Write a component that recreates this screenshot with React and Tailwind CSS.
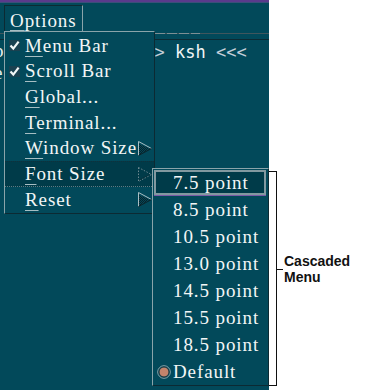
import React from 'react'

function Check() {
  return (
    <svg width="11" height="11" viewBox="0 0 11 11" className="shrink-0">
      <rect x="0" y="0" width="11" height="11" fill="#1a4150" />
      <path d="M1.5 5.5 L4.3 8.6 L9.6 1.6" fill="none" stroke="#f2f6f6" strokeWidth="2.2" />
    </svg>
  )
}

function Arrow({ dim, id }) {
  if (dim) {
    return (
      <svg width="14" height="15" viewBox="0 0 14 15">
        <polygon points="0.5,0.5 13.5,7.5 0.5,14.5" fill="none" stroke="#6f8a92" strokeDasharray="1.5 1.5" />
        <path d="M1.5 13 L12 7.5" stroke="#0d2830" strokeDasharray="1 1" />
      </svg>
    )
  }
  return (
    <svg width="14" height="15" viewBox="0 0 14 15">
      <defs>
        <pattern id={id} width="2" height="2" patternUnits="userSpaceOnUse">
          <rect width="1" height="1" fill="#0b2229" />
          <rect x="1" y="1" width="1" height="1" fill="#0b2229" />
        </pattern>
      </defs>
      <polygon points="1,3 12,7.5 1,14" fill={`url(#${id})`} />
      <path d="M0.5 14.5 L0.5 0.5 L13.5 7.5" fill="none" stroke="#a9bec3" />
      <path d="M0.5 14.5 L13.5 7.5" fill="none" stroke="#0b2229" />
    </svg>
  )
}

function Radio() {
  return (
    <svg width="14" height="14" viewBox="0 0 14 14">
      <circle cx="7" cy="7" r="6.3" fill="none" stroke="#8ea6ac" />
      <circle cx="7" cy="7" r="5" fill="#c3846c" stroke="#173640" />
    </svg>
  )
}

function Mn({ c }) {
  return <span className="underline decoration-[#a6bec3] decoration-1 underline-offset-[4px]">{c}</span>
}

const items = [
  { m: 'M', rest: 'enu Bar', check: true },
  { m: 'S', rest: 'croll Bar', check: true },
  { m: 'G', rest: 'lobal...' },
  { m: 'T', rest: 'erminal...' },
  { m: 'W', rest: 'indow Size', arrow: true },
  { m: 'F', rest: 'ont Size', arrow: true, active: true },
  { m: 'R', rest: 'eset', arrow: true },
]

const sizes = ['7.5 point', '8.5 point', '10.5 point', '13.0 point', '14.5 point', '15.5 point', '18.5 point']

export default function App() {
  return (
    <div className="flex w-[369px] h-[390px] bg-white">
      {/* terminal window */}
      <div className="relative w-[269px] h-[390px] bg-[#02495a] overflow-hidden shrink-0">
        <div className="h-[2px] bg-[#5a3a8c]" />
        <div className="h-px bg-[#3b4f7a]" />

        {/* menubar */}
        <div className="h-[30px] pt-[2px] pl-[4px]">
          <div className="w-[79px] h-[27px] border-t border-l border-r border-b border-t-[#0c2a33] border-l-[#0c2a33] border-l-dotted border-r-[#8aa4aa] border-b-[#8aa4aa] pl-[5px] pt-[1px] text-[19px] tracking-[0.9px] text-[#f2f6f6] font-['Liberation_Serif',serif]">
            <span className="underline decoration-[#a6bec3] decoration-1 underline-offset-[3px]">O</span>ptions
          </div>
        </div>
        <div className="flex h-px">
          <div className="w-[155px] bg-[#40565d]" />
          <div className="w-[45px] bg-[repeating-linear-gradient(90deg,#7d8f94_0_10px,#40565d_10px_12px)]" />
          <div className="flex-1 bg-[#40565d]" />
        </div>
        <div className="h-[5px]" />
        <div className="h-px bg-[#0d2a33]" />

        {/* terminal content */}
        <div className="flex">
          <div className="w-[4px] -ml-[6px] text-[19px] leading-[22px] text-[#e6eeee] font-['Liberation_Serif',serif]">
            <div>p</div>
            <div>e</div>
          </div>
          <div className="pl-[136px] mt-[2px] font-['DejaVu_Sans_Mono','Liberation_Mono',monospace] text-[17px] leading-[20px] whitespace-pre text-[#f2f6f6]">
            <span className="text-[#c4ced8]">&gt;&gt;&gt;</span> ksh <span className="text-[#c4ced8]">&lt;&lt;&lt;</span>
          </div>
        </div>

        {/* Options pull-down */}
        <div className="absolute left-[4px] top-[31px] w-[151px] bg-[#02495a] border-t border-l border-t-[#8aa4aa] border-l-[#8aa4aa] border-r border-r-[#0c2a33] border-r-dotted border-b border-b-[#0c2a33] pt-[1px] text-[19px] tracking-[0.9px] text-[#f2f6f6] font-['Liberation_Serif',serif]">
          {items.map((it) => (
            <div
              key={it.m}
              className={`flex items-center h-[25.7px] pr-[2px] ${
                it.active
                  ? 'bg-[#003b49] border-t border-dotted border-t-[#11303a] border-b border-b-[#5f7a82] border-b-dashed'
                  : ''
              }`}
            >
              <div className="w-[20px] pl-[4px] flex items-center">{it.check && <Check />}</div>
              <div className="flex-1 whitespace-nowrap">
                <Mn c={it.m} />
                {it.rest}
              </div>
              {it.arrow && (
                <div className="flex items-center">
                  <Arrow dim={it.active} id={`stip-${it.m}`} />
                </div>
              )}
            </div>
          ))}
        </div>

        {/* Font Size cascade */}
        <div className="absolute left-[152px] top-[168px] w-[117px] bg-[#02495a] border-l border-t border-l-[#8aa4aa] border-t-[#8aa4aa] border-r border-r-[#0c2a33] border-r-dotted border-b border-b-[#0c2a33] text-[19px] tracking-[0.9px] text-[#f2f6f6] font-['Liberation_Serif',serif]">
          {sizes.map((s, i) =>
            i === 0 ? (
              <div key={s} className="h-[27px] pt-[1px] pl-[1px] pr-[2px]">
                <div className="h-[25px] border-2 border-[#8299a0] bg-[#003b49] pl-[17px] leading-[21px] whitespace-nowrap shadow-[0_1px_0_#7a5aa6]">
                  {s}
                </div>
              </div>
            ) : (
              <div key={s} className="h-[27px] leading-[27px] pl-[20px] whitespace-nowrap">
                {s}
              </div>
            )
          )}
          <div className="flex items-center h-[27px]">
            <div className="w-[20px] pl-[4px] flex items-center">
              <Radio />
            </div>
            <span className="leading-[27px]">Default</span>
          </div>
        </div>
      </div>

      {/* annotation */}
      <div className="flex items-start pt-[171px]">
        <div className="w-[8px] h-[215px] border-t border-r border-b border-[#111]" />
        <div className="mt-[82px] flex items-center">
          <div className="w-[6px] h-px bg-[#111]" />
          <div className="ml-[1px] font-['Liberation_Sans',Arial,sans-serif] font-bold text-[14px] leading-[16px] text-[#111]">
            <div>Cascaded</div>
            <div>Menu</div>
          </div>
        </div>
      </div>
    </div>
  )
}
